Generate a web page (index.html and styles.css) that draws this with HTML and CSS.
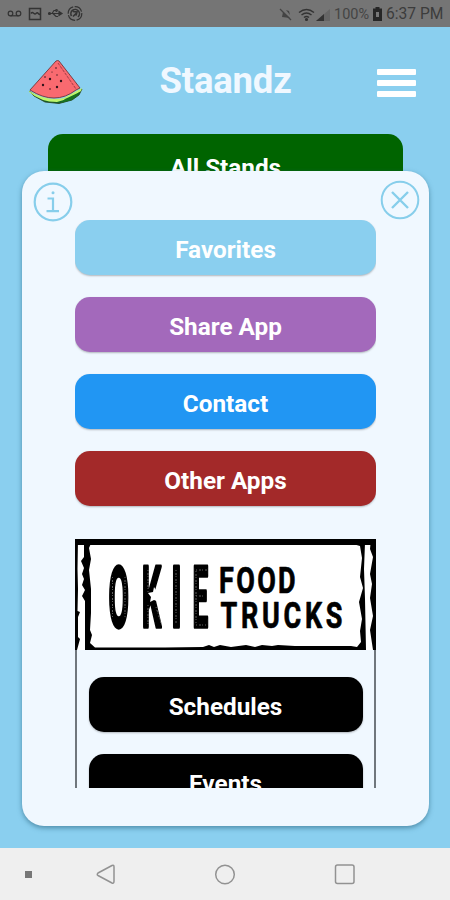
FILE: index.html
```html
<!DOCTYPE html>
<html lang="en">
<head>
<meta charset="utf-8">
<title>Staandz</title>
<link rel="stylesheet" href="styles.css">
</head>
<body>
<div class="phone">
  <div class="status">
    <svg class="status-left" viewBox="0 0 90 27" width="90" height="27" fill="none" stroke="#333" stroke-width="1.2">
      <circle cx="10.5" cy="13.5" r="2.3"/><circle cx="18.5" cy="13.5" r="2.3"/><path d="M10.500 15.800h8"/>
      <path d="M29.500 8.500h11v11h-11zM31 13.500c2-3 3 2 5 0s2 1 4 1" stroke-width="1.500"/>
      <path d="M48 13.500h13M52 13.500l2-3h2M53 13.500l3 3h2"/><circle cx="49.500" cy="13.500" r="1" fill="#333"/><circle cx="56.500" cy="10.500" r=".8"/><path d="M59 11.500l3 2-3 2z" fill="#333"/>
      <circle cx="75" cy="13.500" r="6.800" stroke-dasharray="9 1.500"/><path d="M71.500 16a4.300 4.300 0 1 1 6.500 1M73 11.500l4 .5-1 3.500M73 16.500l3.500-3.500" stroke-width="1.600"/>
    </svg>
    <div class="status-right">
      <svg viewBox="0 0 56 27" width="56" height="27" fill="none" stroke="#333" stroke-width="1.200">
        <path d="M2 8l11 11" stroke="#444"/><path d="M4 16l1-5 7 6zM8 9l3 1 1 4z" fill="#444" stroke="none"/>
        <path d="M21 11.500q7.500-6 15 0M23.500 14q5-4 10 0M26 16.500q2.500-2 5 0" stroke-width="1.500"/><circle cx="28.500" cy="18.500" r="1" fill="#333"/>
        <path d="M38 20L52 8v12z" fill="#666" stroke="none"/><path d="M38 20L46 13v7z" fill="#333" stroke="none"/>
      </svg>
      <span class="percent">100%</span>
      <svg class="battery" viewBox="0 0 9 14" width="9" height="14"><path d="M2.500 0h4v1.500H9V14H0V1.500h2.500z" fill="#262626"/><path d="M3 5h3v5H3z" fill="#777"/></svg>
      <span class="time">6:37 PM</span>
    </div>
  </div>
  <main class="app">
    <header class="header">
      <svg class="melon" viewBox="0 0 56 46" width="56" height="46">
        <path d="M1 31L10 37 26 41 42 38 54 29 51 35 44 40 31 43.500 17 42 6 36z" fill="#176a28" stroke="#263b1b" stroke-width=".8"/>
        <path d="M1 31Q20 42 36 38L54 28 53 31Q42 39 29 42Q13 42 1 32z" fill="#bdf56c"/>
        <path d="M37 39L52 32 50 35 44 40 33 43z" fill="#167321"/>
        <path d="M28 1L2 30Q27 46 48 30L52 28 31 1Q30 0 28 1z" fill="#f96a70" stroke="#733538" stroke-width=".9"/>
        <path d="M30 3L48 29" fill="none" stroke="#a33d47" stroke-width="1" stroke-dasharray="3 1"/>
        <g fill="#30141a"><circle cx="22" cy="19" r="1.200"/><circle cx="15" cy="25" r="1.200"/><circle cx="33" cy="21" r="1.200"/><circle cx="29" cy="27" r="1.200"/><circle cx="17" cy="17" r=".8"/><circle cx="28" cy="8" r=".8"/><circle cx="24" cy="12" r=".6"/><circle cx="22" cy="29" r=".8"/><circle cx="29" cy="15" r=".7"/></g>
      </svg>
      <h1>Staandz</h1>
      <div class="menu"><i></i><i></i><i></i></div>
    </header>
    <div class="stands">All Stands</div>
    <section class="modal">
      <svg class="info" viewBox="0 0 40 40" width="40" height="40" fill="none" stroke="#87ceeb" stroke-width="2.200"><circle cx="20" cy="20" r="18.300"/><path d="M14.500 16.500H20V29M13.500 29.200h12.500"/><circle cx="20" cy="10.800" r="1.500" fill="#87ceeb" stroke="none"/></svg>
      <svg class="close" viewBox="0 0 40 40" width="40" height="40" fill="none" stroke="#87ceeb" stroke-width="2"><circle cx="20" cy="20" r="18.300"/><path d="M12 12l16 16M28 12L12 28" stroke-width="2.400"/></svg>
      <div class="content">
        <div class="button favorites">Favorites</div>
        <div class="button share">Share App</div>
        <div class="button contact">Contact</div>
        <div class="button other">Other Apps</div>
        <div class="promo">
          <svg class="banner" viewBox="0 0 301 112" width="301" height="112">
            <path d="M0 0h301v111H0z" fill="#fff"/>
            <path d="M0 0H301V6H0z"/>
            <path d="M0 0H3L2.500 30 3 50 2.500 72 5 73 3 78V98L5 100 2 111H0z"/>
            <path d="M9 2H17L14 9 16 20 14 31 16 50V74L15 91 17 96 15 104 20 108.500 90 108.500 128 108 134 106 139 108 145 106 156 108 171 106 180 108 187 106 197 107 203 106 220 107 276 107 282 108 286 103 285 92 287 80 284 63 288 49 285 38 287 19 285 7 278 5 290 4 289 30 290 60 291 111H10V62L7 57 10 51 7 46 9 40 7 35 9 29 6 22 9 18z"/>
            <path d="M296 0H301V111H298L295 91 298 77 295 59 297 45 295 35 298 18 295 10z"/>
            <g class="okie" text-anchor="middle">
              <text transform="translate(43.700 87.500) scale(.35 1)">O</text>
              <text transform="translate(76.500 87.500) scale(.36 1)">K</text>
              <text transform="translate(101.500 87.500) scale(.44 1)">I</text>
              <text transform="translate(125.500 87.500) scale(.33 1)">E</text>
            </g>
            <path d="M79 48l3 5 4 1-3 4 1 5-5-2-4 2 1-5-3-4 5-1z" fill="#fff"/>
            <path d="M37.500 38v40M50 38v40M73 31v22M73 66v20M81 68l5 16M101 31v53M121 32v52M121 31h11M121 57h7M121 86h10" fill="none" stroke="#888" stroke-width=".7" stroke-dasharray="1 2 2 1"/>
            <g class="trucks"><text transform="translate(144 53.500) scale(.73 1)" textLength="105" lengthAdjust="spacing">FOOD</text><text transform="translate(145.500 88.500) scale(.73 1)" textLength="167" lengthAdjust="spacing">TRUCKS</text></g>
          </svg>
          <div class="promo-list">
            <div class="button black">Schedules</div>
            <div class="button black">Events</div>
          </div>
        </div>
      </div>
    </section>
  </main>
  <nav class="navigation">
    <svg viewBox="0 0 450 52" width="450" height="52" fill="none" stroke="#929292" stroke-width="1.500" stroke-linejoin="round"><path d="M25 23h7v7h-7z" fill="#777" stroke="none"/><path d="M98 25L112 17.500Q114 16.500 114 19V33Q114 36 112 35L98 27.500Q96.500 26.500 98 25z"/><circle cx="225" cy="26.500" r="9.300"/><rect x="335.500" y="17" width="18.500" height="18.500" rx="2"/></svg>
  </nav>
</div>
</body>
</html>
```
FILE: styles.css
```css
* { box-sizing: border-box; }
body { margin: 0; font-family: Roboto, sans-serif; background: #8acfef; }
svg { display: block; }
.phone { display: flex; flex-direction: column; width: 450px; height: 900px; overflow: hidden; }
.status { display: flex; justify-content: space-between; height: 27px; background: #757575; color: #3c3c3c; }
.status-right { display: flex; align-items: center; width: 172px; padding-top: 1px; font-size: 15.6px; white-space: nowrap; }
.percent { width: 35px; font-size: 14.5px; color: #444; }
.battery { margin: 0 4px; flex-shrink: 0; }
.app { position: relative; height: 821px; background: #8acfef; }
.header { display: grid; grid-template-columns: 56px 1fr 56px; align-items: start; height: 107px; padding: 32px 24px 0 28px; }
.melon { margin-top: 1px; }
h1 { margin: 0; padding-right: 3px; font-size: 36.5px; line-height: 44px; letter-spacing: -.2px; color: #f0f8ff; text-align: center; }
.menu { display: grid; gap: 5px; padding: 10px 0 0 7px; }
.menu i { width: 39px; height: 6px; background: #fff; border-radius: 1px; }
.stands { width: 355px; height: 65px; margin-left: 48px; padding-top: 20px; background: #006400; border-radius: 15px; color: #fff; font-size: 24.3px; line-height: 28px; font-weight: 700; text-align: center; }
.modal { position: absolute; left: 22px; top: 144px; width: 407px; height: 655px; padding-top: 49px; border-radius: 22px; background: #f0f8ff; box-shadow: 0 2px 5px #26607c99; }
.info { position: absolute; left: 11px; top: 11px; }
.close { position: absolute; right: 9px; top: 9px; }
.content { display: flex; flex-direction: column; gap: 22px; width: 301px; height: 568px; margin-left: 53px; overflow: hidden; }
.button { flex: 0 0 55px; height: 55px; border-radius: 15px; color: #fff; font-size: 24.3px; line-height: 60px; font-weight: 700; text-align: center; box-shadow: 0 1px 2px #0004; }
.favorites { background: #8acfef; }
.share { background: #a369bb; }
.contact { background: #2196f3; }
.other { background: #a32929; }
.promo { flex: 0 0 420px; margin-top: 11px; border: solid #70777d; border-width: 1px 2px; }
.banner { margin: -1px 0 0 -2px; }
.okie { font: 700 85px Roboto, sans-serif; stroke: #000; stroke-width: 3.5px; stroke-linejoin: round; }
.trucks { font: 700 37px Roboto, sans-serif; stroke: #000; stroke-width: .7px; stroke-linejoin: round; }
.promo-list { display: grid; gap: 22px; padding: 26px 11.5px 0; }
.black { background: #000; }
.navigation { height: 52px; background: #efefef; }
```
